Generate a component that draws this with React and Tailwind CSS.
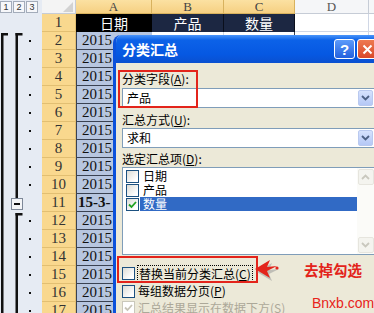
import React from "react";

const cols = [
  { key: "A", w: "w-[76px]" },
  { key: "B", w: "w-[72px]" },
  { key: "C", w: "w-[71px]" },
  { key: "D", w: "w-[74px]" },
];

const rows = Array.from({ length: 17 }, (_, i) => i + 1);

function HeaderRow() {
  return (
    <div className="flex h-[14px]">
      <div className="flex w-[42px] items-center gap-[1px] bg-[#E6EBF3]">
        {["1", "2", "3"].map((n) => (
          <span
            key={n}
            className="flex h-[12px] w-[12px] items-center justify-center border border-[#A3ACBA] bg-[#F6F7FA] font-[family-name:'Liberation_Sans',sans-serif] text-[9px] leading-none text-[#333]"
          >
            {n}
          </span>
        ))}
      </div>
      <div className="flex w-[34px] items-end justify-end border-r border-b border-[#C6CCD6] bg-[#F4F4F4] pr-[2px] pb-[1px]">
        <svg width="10" height="10" viewBox="0 0 10 10">
          <polygon points="10,0 10,10 0,10" fill="#D2D2D2" />
        </svg>
      </div>
      {cols.map((c) => (
        <div
          key={c.key}
          className={`${c.w} flex items-center justify-center border-r border-b text-[13px] leading-none ${
            c.key === "D"
              ? "border-[#C6CCD6] bg-[#F5F6F8] text-[#555]"
              : "border-[#D8B25E] bg-[linear-gradient(to_bottom,#FBE1A2,#F6D082)] text-[#444]"
          }`}
        >
          {c.key}
        </div>
      ))}
      <div className="flex-1 border-b border-[#C6CCD6] bg-[#F5F6F8]" />
    </div>
  );
}

function OutlineGutter() {
  const dotRows = [2, 3, 4, 5, 6, 7, 8, 9, 10, 12, 13, 14, 15, 16, 17];
  return (
    <div className="w-[42px] shrink-0 bg-[#E6EBF3]">
      <svg width="42" height="299" viewBox="0 0 42 299">
        <rect x="1" y="19" width="2.5" height="290" fill="#111" />
        <rect x="1" y="19" width="7" height="2.5" fill="#111" />
        <rect x="15.5" y="19" width="2.5" height="165" fill="#111" />
        <rect x="15.5" y="19" width="7" height="2.5" fill="#111" />
        <rect x="15.5" y="199" width="2.5" height="110" fill="#111" />
        <rect x="15.5" y="199" width="7" height="2.5" fill="#111" />
        <rect x="11.5" y="184.5" width="11" height="11" fill="#F4F5F7" stroke="#7E8898" />
        <rect x="14" y="189" width="6" height="2" fill="#111" />
        {dotRows.map((r) => (
          <rect key={r} x="29" y={(r - 1) * 18 + 8} width="2" height="2" fill="#111" />
        ))}
      </svg>
    </div>
  );
}

function SheetRow({ n }) {
  const head = n === 1;
  return (
    <div className="flex h-[18px]">
      <div className="flex w-[34px] items-center justify-center border-r border-b border-[#E2BF72] bg-[#F9D88E] text-[15px] leading-none text-[#333]">
        {n}
      </div>
      {head ? (
        <>
          <div className="flex w-[76px] items-center justify-center bg-black font-[family-name:'Noto_Sans_CJK_SC',sans-serif] text-[14px] leading-none text-white">
            日期
          </div>
          <div className="flex w-[72px] items-center justify-center border-r border-[#0A0F1C] bg-[#1C2742] font-[family-name:'Noto_Sans_CJK_SC',sans-serif] text-[14px] leading-none text-white">
            产品
          </div>
          <div className="flex w-[71px] items-center justify-center border-r border-[#0A0F1C] bg-[#1C2742] font-[family-name:'Noto_Sans_CJK_SC',sans-serif] text-[14px] leading-none text-white">
            数量
          </div>
        </>
      ) : (
        <>
          <div
            className={`flex w-[76px] items-center overflow-hidden whitespace-nowrap border-l border-b border-[#3A4252] bg-[#B7C6E0] text-[15px] leading-none text-[#111] ${
              n === 11 ? "pl-[1px] font-bold" : "pl-[5px]"
            }`}
          >
            {n === 11 ? "15-3-" : "2015"}
          </div>
          <div className="w-[72px] border-r border-b border-[#D0D7E5] bg-white" />
          <div className="w-[71px] border-r border-b border-[#3A4252] bg-white" />
        </>
      )}
      <div className="w-[74px] border-r border-b border-[#D0D7E5] bg-white" />
      <div className="flex-1 border-b border-[#D0D7E5] bg-white" />
    </div>
  );
}

function CheckBox({ checked, disabled }) {
  return (
    <span
      className={`flex h-[13px] w-[13px] shrink-0 items-center justify-center border ${
        disabled
          ? "border-[#CAC8BB] bg-white"
          : "border-[#1C5180] bg-[linear-gradient(135deg,#DCDCD6,#FFFFFF_80%)]"
      }`}
    >
      {checked && (
        <svg width="9" height="9" viewBox="0 0 9 9">
          <path
            d="M1 4.5 L3.5 7 L8 2"
            fill="none"
            stroke={disabled ? "#C6C3B6" : "#21A121"}
            strokeWidth="1.8"
          />
        </svg>
      )}
    </span>
  );
}

function ComboBox({ value }) {
  return (
    <div className="flex h-[20px] w-[253px] items-center border border-[#7F9DB9] bg-white">
      <span className="flex-1 pl-[4px] text-[12px] leading-none text-black">{value}</span>
      <span className="mr-[1px] flex h-[16px] w-[15px] items-center justify-center rounded-[2px] border border-[#B9C9EF] bg-[linear-gradient(to_bottom,#D6E2FD,#B5C8F6)]">
        <svg width="9" height="6" viewBox="0 0 9 6">
          <path d="M1 1 L4.5 4.5 L8 1" fill="none" stroke="#4D6185" strokeWidth="1.8" />
        </svg>
      </span>
    </div>
  );
}

function ScrollBtn({ up }) {
  return (
    <span className="flex h-[16px] w-[16px] items-center justify-center rounded-[2px] border border-[#E6E5DE] bg-[#F4F4EF]">
      <svg width="9" height="6" viewBox="0 0 9 6">
        <path
          d={up ? "M1 5 L4.5 1.5 L8 5" : "M1 1 L4.5 4.5 L8 1"}
          fill="none"
          stroke="#C9C8BE"
          strokeWidth="1.8"
        />
      </svg>
    </span>
  );
}

function Dialog() {
  const items = [
    { label: "日期", checked: false },
    { label: "产品", checked: false },
    { label: "数量", checked: true, selected: true },
  ];
  return (
    <div className="absolute top-[35px] left-[113px] h-[290px] w-[270px] overflow-hidden rounded-tl-[8px] border-l-[3px] border-[#0B51DC] bg-[#ECE9D8] font-[family-name:'Noto_Sans_CJK_SC',sans-serif]">
      <div className="flex h-[28px] items-center bg-[linear-gradient(to_bottom,#4A95FA,#0C62E8_18%,#0658E2_70%,#0A50D0)] pr-[5px] pl-[6px]">
        <span className="text-[14px] leading-none font-bold text-white">分类汇总</span>
        <span className="flex-1" />
        <span className="flex h-[20px] w-[21px] items-center justify-center rounded-[3px] border border-white bg-[linear-gradient(to_bottom,#5D9BFA,#2461DE)] font-[family-name:'Liberation_Sans',sans-serif] text-[15px] leading-none font-bold text-white">
          ?
        </span>
        <span className="ml-[2px] flex h-[20px] w-[21px] items-center justify-center rounded-[3px] border border-white bg-[linear-gradient(to_bottom,#EE7A52,#D9482A)]">
          <svg width="11" height="11" viewBox="0 0 11 11">
            <path d="M1.5 1.5 L9.5 9.5 M9.5 1.5 L1.5 9.5" stroke="#fff" strokeWidth="2" />
          </svg>
        </span>
      </div>
      <div className="flex flex-col px-[6px] text-[12px] text-black">
        <div className="mt-[9px] h-[14px] leading-[14px]">分类字段(<u>A</u>):</div>
        <div className="mt-[2px]">
          <ComboBox value="产品" />
        </div>
        <div className="mt-[5px] h-[14px] leading-[14px]">汇总方式(<u>U</u>):</div>
        <div className="mt-[1px]">
          <ComboBox value="求和" />
        </div>
        <div className="mt-[4px] h-[14px] leading-[14px]">选定汇总项(<u>D</u>):</div>
        <div className="mt-[1px] flex h-[88px] w-[253px] border border-[#7F9DB9] bg-white">
          <div className="flex flex-1 flex-col pt-[1px]">
            {items.map((it) => (
              <div key={it.label} className="flex h-[14px] items-center pl-[3px]">
                <CheckBox checked={it.checked} />
                <span
                  className={`ml-[1px] flex h-[14px] flex-1 items-center pl-[3px] leading-[14px] ${
                    it.selected ? "bg-[#316AC5] text-white" : "text-black"
                  }`}
                >
                  {it.label}
                </span>
              </div>
            ))}
          </div>
          <div className="flex w-[17px] flex-col items-center justify-between bg-[#FBFBF8] py-[1px]">
            <ScrollBtn up />
            <ScrollBtn />
          </div>
        </div>
        <div className="mt-[9px] flex h-[19px] items-center">
          <CheckBox />
          <span className="ml-[2px] border border-dotted border-black px-[1px] leading-[15px]">
            替换当前分类汇总(<u>C</u>)
          </span>
        </div>
        <div className="flex h-[16px] items-center">
          <CheckBox />
          <span className="ml-[3px] leading-none">每组数据分页(<u>P</u>)</span>
        </div>
        <div className="flex h-[17px] items-center text-[#ACA899]">
          <CheckBox checked disabled />
          <span className="ml-[3px] leading-none">汇总结果显示在数据下方(S)</span>
        </div>
      </div>
    </div>
  );
}

function Annotations() {
  return (
    <>
      <div className="absolute top-[70px] left-[118px] h-[38px] w-[80px] border-2 border-[#E3241B]" />
      <div className="absolute top-[256px] left-[117px] h-[27px] w-[141px] border-2 border-[#E3241B]" />
      <svg className="absolute top-[255px] left-[255px]" width="30" height="28" viewBox="0 0 30 28">
        <g transform="translate(2 3)" fill="#9A9A9A" opacity="0.55">
          <polygon points="0,14 15,5 12,12 22,11 12,16 15,23" />
        </g>
        <polygon points="0,14 15,5 12,12 22,11 12,16 15,23" fill="#E3241B" />
        <circle cx="22" cy="13" r="1.6" fill="#E3241B" />
      </svg>
      <div className="absolute top-[261px] left-[304px] font-[family-name:'Noto_Sans_CJK_SC',sans-serif] text-[14.5px] leading-[18px] font-bold text-[#E3241B]">
        去掉勾选
      </div>
      <div className="absolute top-[296px] left-[312px] font-[family-name:'Liberation_Sans',sans-serif] text-[14px] leading-[15px] text-[#E8231A]">
        Bnxb.com
      </div>
    </>
  );
}

export default function App() {
  return (
    <div className="relative h-[313px] w-[374px] overflow-hidden bg-white font-[family-name:'Liberation_Serif','Noto_Sans_CJK_SC',serif] text-[#222]">
      <HeaderRow />
      <div className="flex">
        <OutlineGutter />
        <div className="flex flex-1 flex-col">
          {rows.map((n) => (
            <SheetRow key={n} n={n} />
          ))}
        </div>
      </div>
      <Dialog />
      <Annotations />
    </div>
  );
}
